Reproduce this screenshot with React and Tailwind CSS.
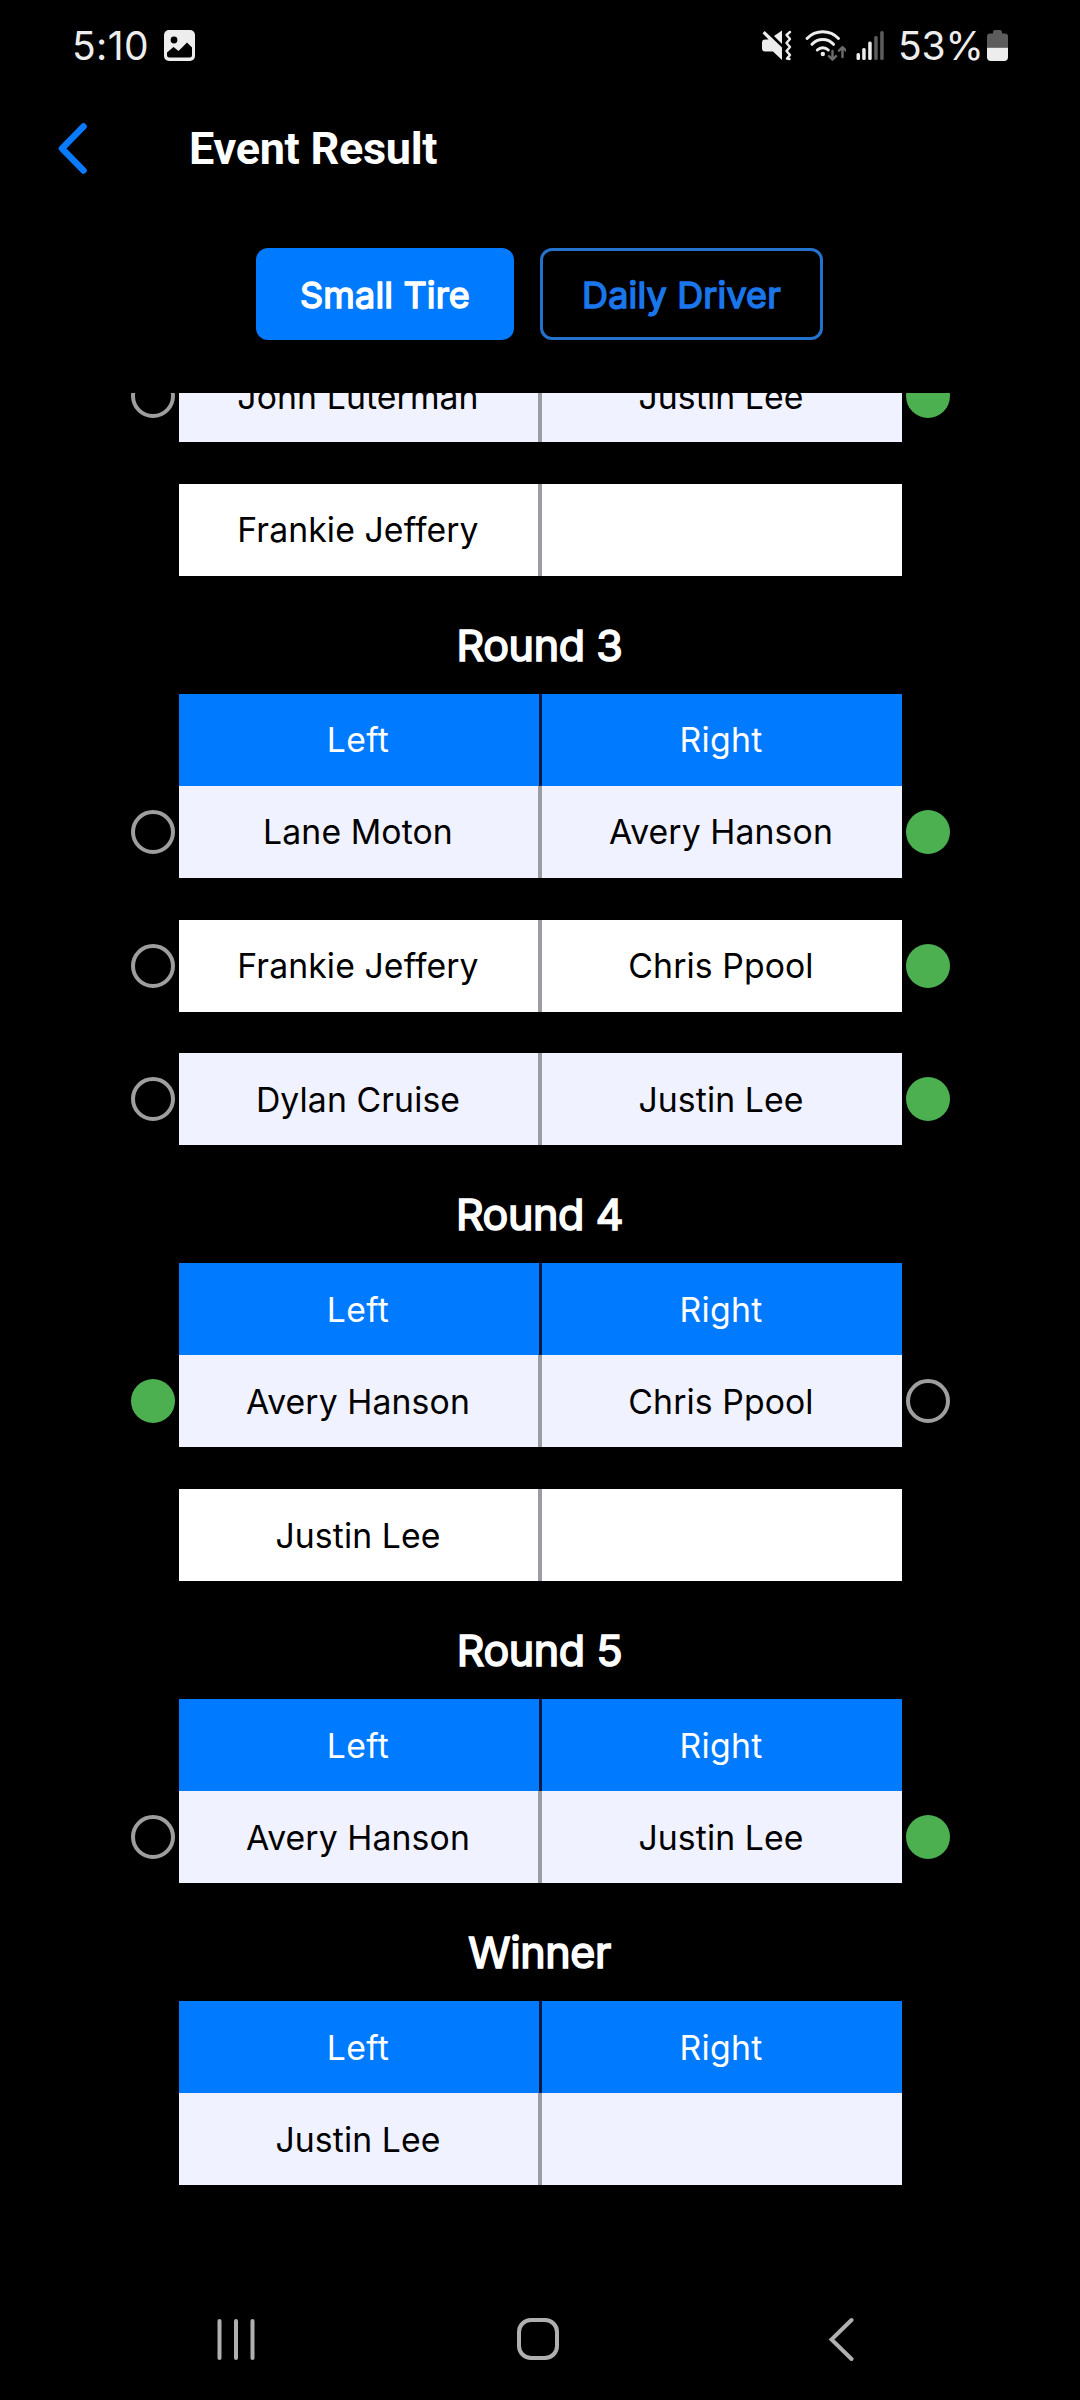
import React from "react";

const rounds = [
  {
    // scrolled partly under the category tabs
    title: null,
    rows: [
      { left: "John Luterman", right: "Justin Lee", winner: "right" },
      { left: "Frankie Jeffery", right: "" },
    ],
  },
  {
    title: "Round 3",
    rows: [
      { left: "Lane Moton", right: "Avery Hanson", winner: "right" },
      { left: "Frankie Jeffery", right: "Chris Ppool", winner: "right" },
      { left: "Dylan Cruise", right: "Justin Lee", winner: "right" },
    ],
  },
  {
    title: "Round 4",
    rows: [
      { left: "Avery Hanson", right: "Chris Ppool", winner: "left" },
      { left: "Justin Lee", right: "" },
    ],
  },
  {
    title: "Round 5",
    rows: [{ left: "Avery Hanson", right: "Justin Lee", winner: "right" }],
  },
  {
    title: "Winner",
    rows: [{ left: "Justin Lee", right: "" }],
  },
];

const StatusBar = () => (
  <div className="flex h-[90px] items-center justify-between pl-[72px] pr-[72px] text-[#ededed]">
    <div className="flex items-center">
      <span className="w-[92px] text-[39px] leading-none tracking-[0.4px]">
        5:10
      </span>
      <svg width="31" height="31" viewBox="0 0 31 31">
        <rect width="31" height="31" rx="5" fill="#ededed" />
        <circle cx="10" cy="10" r="3.4" fill="#000" />
        <path
          d="M3 22.5 9.5 17l5 4 8.5-8.5 5 5V25a2.5 2.5 0 0 1-2.5 2.5h-20A2.5 2.5 0 0 1 3 25z"
          fill="#000"
        />
      </svg>
    </div>
    <div className="flex items-center">
      {/* muted, vibrating */}
      <svg width="32" height="32" viewBox="0 0 32 32" fill="#ededed">
        <path d="M13 7 21 1.500v13.500z" />
        <path d="M4 10.500h3.500L1.500 4.200l2.200-2.200L21 18.500V31l-9-8.500H4a3 3 0 0 1-3-3v-6a3 3 0 0 1 3-3z" />
        <path
          d="M29 3l-3.500 3 3.500 4-3.500 4 3.500 4-3.500 4 3.500 4-3 3.500 2.500.5"
          fill="none"
          stroke="#ededed"
          strokeWidth="2.400"
          strokeLinejoin="round"
          strokeLinecap="round"
        />
      </svg>
      <svg
        className="ml-[11px]"
        width="42"
        height="32"
        viewBox="0 0 42 32"
        fill="none"
        strokeLinecap="round"
        strokeLinejoin="round"
      >
        <g stroke="#ededed" strokeWidth="3">
          <path d="M3 9.500a21.500 21.500 0 0 1 31.500 0" />
          <path d="M8 15.300a14.500 14.500 0 0 1 21.500 0" />
          <path d="M13.300 21a8 8 0 0 1 11 0" />
        </g>
        <circle cx="18.800" cy="25" r="2.200" fill="#ededed" />
        <g stroke="#6b6b6b" strokeWidth="2.400">
          <path d="M28.500 22v8.500M25 27.200l3.500 3.500 3.500-3.500" />
          <path d="M38.500 28v-9.500M35 21.700l3.500-3.500 3.500 3.500" />
        </g>
      </svg>
      <svg className="ml-[10px]" width="29" height="32" viewBox="0 0 29 32">
        <g fill="#ededed">
          <rect x="0.500" y="24" width="3.500" height="7" rx="1.500" />
          <rect x="6.200" y="19" width="3.500" height="12" rx="1.500" />
          <rect x="12.200" y="12.500" width="3.500" height="18.500" rx="1.500" />
        </g>
        <g fill="#5c5c5c">
          <rect x="18.200" y="7" width="3.500" height="24" rx="1.500" />
          <rect x="24.200" y="2" width="3.500" height="29" rx="1.500" />
        </g>
      </svg>
      <span className="ml-[13px] w-[89px] whitespace-nowrap text-[39px] leading-none tracking-[-0.1px]">
        53%
      </span>
      <svg width="21" height="32" viewBox="0 0 21 32">
        <path
          d="M6 4V3a2 2 0 0 1 2-2h5a2 2 0 0 1 2 2v1.500h3a3 3 0 0 1 3 3V18H0V7.500a3 3 0 0 1 3-3h3z"
          fill="#5c5c5c"
        />
        <path d="M0 18.500h21V28a4 4 0 0 1-4 4H4a4 4 0 0 1-4-4z" fill="#ededed" />
      </svg>
    </div>
  </div>
);

const Header = () => (
  <div className="flex h-[118px] items-center pb-0.5 pl-[57px]">
    <svg
      width="30"
      height="52"
      viewBox="0 0 30 52"
      fill="none"
      stroke="#0a7aff"
      strokeWidth="6.500"
      strokeLinecap="round"
      strokeLinejoin="round"
    >
      <path d="M26.500 4.500 5 26.500 26.500 48.500" />
    </svg>
    <h1 className="ml-[102px] font-[Roboto,sans-serif] text-[45px] font-bold leading-none tracking-[-0.3px] text-white">
      Event Result
    </h1>
  </div>
);

const Tabs = () => (
  <div className="flex h-[185px] justify-center gap-[26px] pr-px pt-10 text-[36px] tracking-[0.15px] [-webkit-text-stroke:1.5px]">
    <button className="h-[92px] w-[258px] rounded-xl bg-[#007aff] pt-0.5 text-white">
      Small Tire
    </button>
    <button className="h-[92px] w-[283px] rounded-xl border-3 border-[#2472cc] pt-0.5 text-[#1a76ea]">
      Daily Driver
    </button>
  </div>
);

const Marker = ({ won }) =>
  won ? (
    <div className="size-11 rounded-full bg-[#4caf50]" />
  ) : (
    <div className="size-11 rounded-full border-4 border-[#9e9e9e]" />
  );

const Row = ({ left, right, winner, striped }) => (
  <div className="flex items-center justify-center gap-1 pl-px">
    <div className="w-11">{winner && <Marker won={winner === "left"} />}</div>
    <div
      className={`flex h-[92px] w-[723px] text-[33.75px] font-[380] tracking-[0.1px] text-black ${
        striped ? "bg-[#f0f2ff]" : "bg-white"
      }`}
    >
      <div className="flex flex-1 items-center justify-center border-r-2 border-[#9c9da3] pr-px pt-0.5">
        {left}
      </div>
      <div className="flex flex-1 items-center justify-center border-l-2 border-[#9c9da3] pr-0.5 pt-0.5">
        {right}
      </div>
    </div>
    <div className="w-11">{winner && <Marker won={winner === "right"} />}</div>
  </div>
);

const Round = ({ title, rows }) => (
  <section>
    {title && (
      <>
        <h2 className="flex h-[118px] items-center justify-center pr-px pt-5 text-[43px] tracking-[-0.4px] text-white [-webkit-text-stroke:1.7px]">
          {title}
        </h2>
        <div className="flex justify-center pl-px">
          <div className="flex h-[92px] w-[723px] bg-[#007aff] text-[33.75px] font-[380] tracking-[0.3px] text-white">
            <div className="flex flex-1 items-center justify-center border-r-2 border-[#001a45] pr-0.5 pt-0.5">
              Left
            </div>
            <div className="flex flex-1 items-center justify-center border-l-1 border-[#001a45] pr-0.5 pt-0.5">
              Right
            </div>
          </div>
        </div>
      </>
    )}
    <div className="flex flex-col gap-[41.75px]">
      {rows.map((row, i) => (
        <Row key={i} {...row} striped={i % 2 === 0} />
      ))}
    </div>
  </section>
);

const NavBar = () => (
  <div className="flex h-[122px] items-center pl-[216px]">
    <svg width="40" height="44" viewBox="0 0 40 44" fill="#b0b0b0">
      <rect x="1.500" y="2" width="4" height="41" rx="2" />
      <rect x="18" y="2" width="4" height="41" rx="2" />
      <rect x="34.500" y="2" width="4" height="41" rx="2" />
    </svg>
    <div className="ml-[261px] size-[42px] rounded-[14px] border-4 border-[#b0b0b0]" />
    <svg
      className="ml-[268px]"
      width="28"
      height="44"
      viewBox="0 0 28 44"
      fill="none"
      stroke="#b0b0b0"
      strokeWidth="4"
      strokeLinecap="round"
    >
      <path d="M24.500 3 4.500 22.500 24.500 42" />
    </svg>
  </div>
);

export default function App() {
  return (
    <div className="flex h-[2400px] w-[1080px] flex-col bg-black font-[Inter,sans-serif]">
      <StatusBar />
      <Header />
      <Tabs />
      <main className="flex flex-1 flex-col justify-end overflow-hidden pb-[93px]">
        {rounds.map((round, i) => (
          <Round key={i} {...round} />
        ))}
      </main>
      <NavBar />
    </div>
  );
}
